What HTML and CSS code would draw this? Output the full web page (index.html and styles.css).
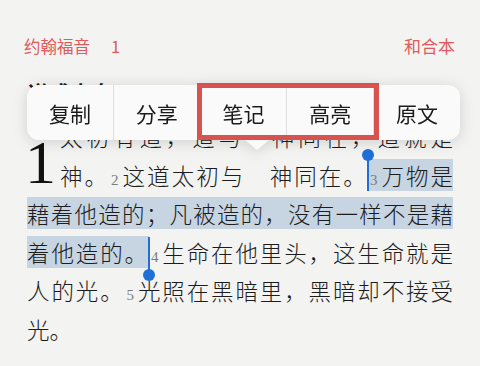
FILE: index.html
```html
<!DOCTYPE html>
<html lang="zh-CN">
<head>
<meta charset="utf-8">
<title>约翰福音 1</title>
<link rel="stylesheet" href="styles.css">
</head>
<body>
<header class="top">
  <div class="book"><span>约翰福音</span><span class="chap">1</span></div>
  <div class="version">和合本</div>
</header>
<h1 class="title">道成肉身</h1>
<p class="text"><span class="dropcap">1</span>太初有道，道与　神同在，道就是<br>神。<span class="vn">2</span>这道太初与　神同在。<span class="caret start"></span><span class="sel"><span class="vn">3</span>万物是<br>藉着他造的；凡被造的，没有一样不是藉<br>着他造的。</span><span class="caret end"></span><span class="vn">4</span>生命在他里头，这生命就是<br>人的光。<span class="vn">5</span>光照在黑暗里，黑暗却不接受</p>
<p class="text last">光。</p>

<div class="menu">
  <div class="item">复制</div>
  <div class="item">分享</div>
  <div class="item">笔记</div>
  <div class="item">高亮</div>
  <div class="item">原文</div>
  <div class="mark"></div>
  <div class="arrow"></div>
</div>
</body>
</html>
```
FILE: styles.css
```css
html, body {
  margin: 0;
  padding: 0;
}
body {
  background: #f3f3f1;
  font-family: "Noto Sans CJK SC", "Noto Sans", sans-serif;
  color: #1c1c1c;
  width: 480px;
  height: 366px;
  overflow: hidden;
  position: relative;
}
.top {
  display: flex;
  justify-content: space-between;
  padding: 34px 25px 0 24px;
  font-size: 16.5px;
  line-height: 24px;
  color: #e05a5e;
}
.chap {
  margin-left: 21px;
}
.version {
  font-size: 17px;
}
.title {
  margin: 19px 27px 0 28px;
  font-size: 21px;
  line-height: 30px;
  font-weight: 700;
}
.text {
  margin: 10px 27px 0 27px;
  font-size: 22.5px;
  font-weight: 300;
  line-height: 38.5px;
  text-align: justify;
  text-align-last: justify;
}
.text.last {
  margin-top: 0;
  text-align-last: left;
}
.dropcap {
  float: left;
  width: 35px;
  height: 77px;
  margin-left: -2px;
  font-family: "Liberation Serif", serif;
  font-size: 62px;
  font-weight: 400;
  line-height: 91px;
  color: #111;
}
.vn {
  font-family: "Liberation Serif", serif;
  font-size: 15px;
  font-weight: 400;
  line-height: 1;
  color: #7c7c7c;
  padding: 0 2px;
}
.sel {
  background: #c7d5e3;
}
.caret {
  position: relative;
  display: inline-block;
  width: 0;
  height: 0;
}
.caret::before {
  content: "";
  position: absolute;
  left: -1px;
  width: 2px;
  background: #1f6fd8;
}
.caret::after {
  content: "";
  position: absolute;
  left: -6px;
  width: 12px;
  height: 12px;
  border-radius: 50%;
  background: #1f6fd8;
}
.caret.start::before {
  top: -30px;
  height: 36px;
}
.caret.start::after {
  top: -36px;
}
.caret.end::before {
  top: -25px;
  height: 35px;
}
.caret.end::after {
  top: 7px;
}
.menu {
  position: absolute;
  left: 27px;
  top: 85px;
  width: 433px;
  height: 55px;
  display: flex;
  background: #fafafa;
  border-radius: 12px;
  filter: drop-shadow(0 2px 7px rgba(0, 0, 0, 0.14));
}
.item {
  flex: 1;
  display: flex;
  align-items: center;
  justify-content: center;
  font-size: 21px;
  color: #1a1a1a;
}
.item + .item {
  border-left: 1px solid #dedede;
}
.mark {
  position: absolute;
  left: 170px;
  top: -2px;
  width: 182px;
  height: 57px;
  box-sizing: border-box;
  border: 5px solid #d8524f;
}
.arrow {
  position: absolute;
  left: 218px;
  top: 55px;
  width: 0;
  height: 0;
  border-left: 12px solid transparent;
  border-right: 12px solid transparent;
  border-top: 10px solid #fafafa;
}
```
